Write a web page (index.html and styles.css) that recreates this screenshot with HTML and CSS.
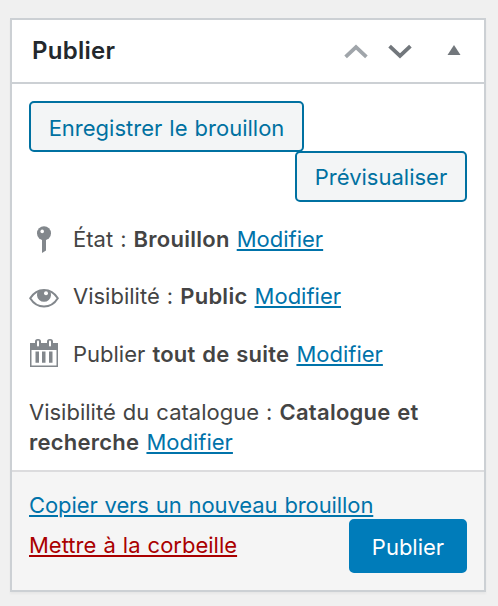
FILE: index.html
```html
<!DOCTYPE html>
<html lang="fr">
<head>
  <meta charset="UTF-8" />
  <meta name="viewport" content="width=device-width, initial-scale=1.0"/>
  <title>Publier</title>
  <link rel="stylesheet" href="styles.css">
</head>
<body>
  <div class="postbox">
    <div class="postbox-header">
      <h2>Publier</h2>
      <div class="handle-actions">
        <svg class="arrow arrow-up" width="24" height="16" viewBox="0 0 24 16"><path d="M1.600 13.900L12 4.100l10.400 9.800"/></svg>
        <svg class="arrow arrow-down" width="24" height="16" viewBox="0 0 24 16"><path d="M1.600 3.200L12 13l10.400-9.800"/></svg>
        <svg class="toggle" width="14" height="12" viewBox="0 0 14 12"><path d="M7 0l6.500 10H.5z"/></svg>
      </div>
    </div>

    <div class="inside">
      <div class="minor-actions">
        <button class="button save">Enregistrer le brouillon</button>
        <button class="button preview">Prévisualiser</button>
      </div>

      <div class="misc-section status">
        <!-- Clé -->
        <svg class="icon" width="30" height="30" viewBox="0 0 30 30"><circle cx="15" cy="9.200" r="7"/><path d="M13 14h4v12.500L13 29z"/><circle class="glint" cx="13.200" cy="7.400" r="1.800"/></svg>
        <p><span class="label">État :</span> <b>Brouillon</b> <a href="#">Modifier</a></p>
      </div>
      <div class="misc-section">
        <!-- Oeil -->
        <svg class="icon" width="30" height="30" viewBox="0 0 30 30"><path class="lid" d="M1.200 17.300C4.500 12 9 9 15 9s10.500 3 13.800 8.300C25.500 22.600 21 25.600 15 25.600S4.500 22.600 1.200 17.300z"/><path d="M9.500 9.500h11A7 7 0 1 1 9.500 9.500z"/><circle class="glint" cx="17" cy="12.300" r="2"/></svg>
        <p><span class="label">Visibilité :</span> <b>Public</b> <a href="#">Modifier</a></p>
      </div>
      <div class="misc-section">
        <!-- Calendrier -->
        <svg class="icon" width="30" height="30" viewBox="0 0 30 30"><path fill-rule="evenodd" d="M1 4h28v24H1zM2.500 11v15.500h25V11z"/><rect x="6" y="0" width="6" height="9" rx="2.600"/><rect x="18" y="0" width="6" height="9" rx="2.600"/><rect class="glint" x="8" y="1.600" width="2" height="5.800" rx="1"/><rect class="glint" x="20" y="1.600" width="2" height="5.800" rx="1"/><path d="M6.500 12.500H10v11.200H6.500zM13 12.500h3.500v11.200H13zM20 12.500h3.500v11.200H20z"/></svg>
        <p><span class="label">Publier</span> <b>tout de suite</b> <a href="#">Modifier</a></p>
      </div>
      <div class="misc-section">
        <p><span class="label">Visibilité du catalogue :</span> <b>Catalogue et recherche</b> <a href="#">Modifier</a></p>
      </div>
    </div>

    <div class="major-actions">
      <a href="#" class="copy">Copier vers un nouveau brouillon</a>
      <div class="publishing">
        <a href="#" class="delete">Mettre à la corbeille</a>
        <button class="button primary">Publier</button>
      </div>
    </div>
  </div>
</body>
</html>
```

FILE: styles.css
```css
* {
  box-sizing: border-box;
}

body {
  margin: 0;
  padding: 18px 12px 14px 10px;
  background: #f0f0f0;
  color: #444;
  font-family: Inter, "Liberation Sans", sans-serif;
  font-size: 22px;
  line-height: 30px;
  word-spacing: 0.9px;
}

.postbox {
  height: 574px;
  border: 2px solid #ccd0d4;
  background: #fff;
  box-shadow: 0 2px 2px rgba(0, 0, 0, 0.04);
}

.postbox-header {
  display: flex;
  justify-content: space-between;
  align-items: center;
  height: 64px;
  padding: 0 23px 0 20px;
  border-bottom: 2px solid #ccd0d4;
}

h2 {
  margin: 0;
  font-size: 24px;
  font-weight: 600;
  letter-spacing: 0.25px;
  color: #23282d;
}

.handle-actions {
  display: flex;
  align-items: center;
}

.arrow {
  fill: none;
  stroke: #72777c;
  stroke-width: 3.8;
  margin-right: 20px;
}

.arrow-up {
  stroke: #a0a5aa;
}

.arrow-down {
  margin-right: 35px;
}

.toggle {
  fill: #72777c;
}

.inside {
  height: 386px;
  padding: 17px 17px 0;
}

.minor-actions {
  display: flex;
  flex-direction: column;
  align-items: flex-start;
  margin-bottom: 22px;
}

.button {
  height: 51px;
  padding: 0;
  border: 2px solid #0071a1;
  border-radius: 5px;
  background: #f3f5f6;
  color: #0071a1;
  font: inherit;
  word-spacing: inherit;
  text-align: center;
  white-space: nowrap;
}

.save {
  width: 275px;
  padding-top: 2px;
}

.preview {
  width: 172px;
  margin-top: -1px;
  align-self: flex-end;
}

.misc-section {
  display: flex;
  gap: 14px;
  margin-bottom: 28px;
}

.status {
  margin-bottom: 27px;
}

.misc-section p {
  margin: 0;
}

.icon {
  flex: none;
  fill: #82878c;
}

.lid {
  fill: none;
  stroke: #82878c;
  stroke-width: 2;
}

.glint {
  fill: #fff;
}

b {
  font-weight: 600;
  letter-spacing: 0.25px;
}

a {
  color: #0073aa;
  text-decoration-thickness: 1.5px;
  text-underline-offset: 2px;
}

.major-actions {
  height: 120px;
  padding: 18px 17px 0;
  border-top: 2px solid #dcdcde;
  background: #f5f5f5;
}

.copy {
  display: block;
  letter-spacing: -0.1px;
}

.publishing {
  display: flex;
  justify-content: space-between;
  align-items: flex-start;
}

.delete {
  margin-top: 10px;
  color: #a00;
}

.primary {
  width: 118px;
  height: 54px;
  margin-top: -1px;
  padding-top: 2px;
  border-color: #007cba;
  background: #007cba;
  color: #fff;
}
```
